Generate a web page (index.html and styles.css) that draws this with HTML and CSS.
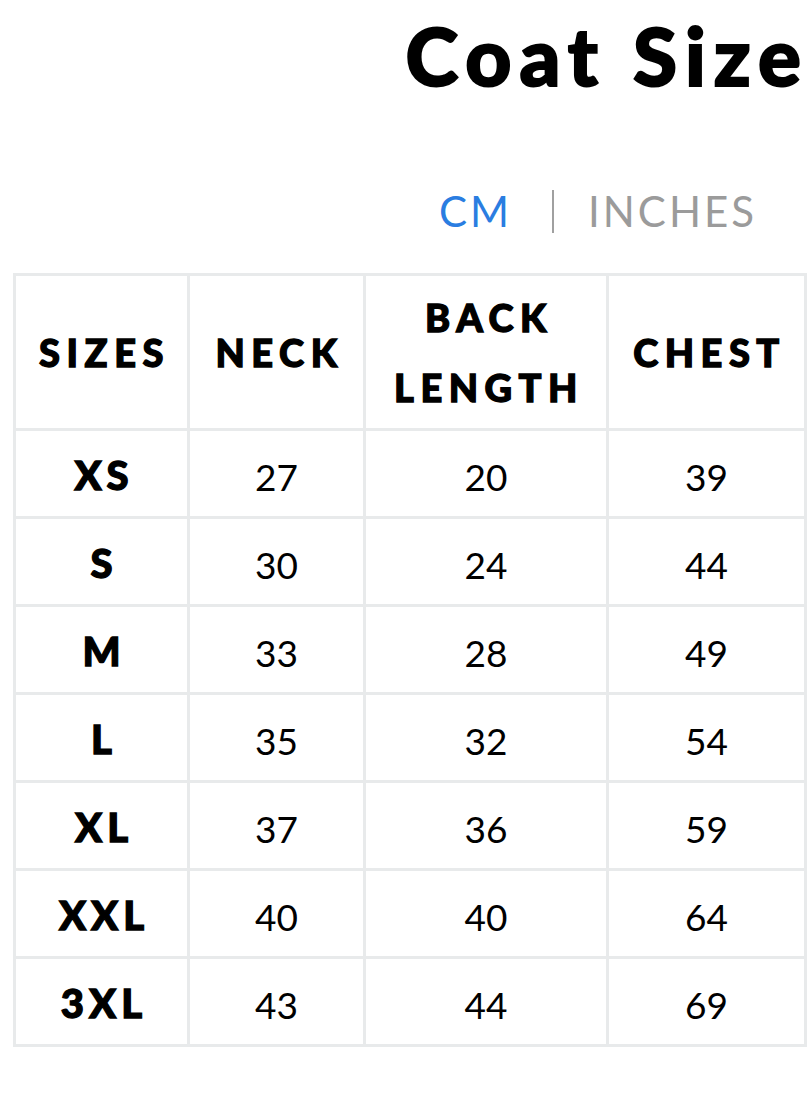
FILE: index.html
```html
<!DOCTYPE html>
<html lang="en">
<head>
<meta charset="utf-8">
<title>Coat Size</title>
<link rel="stylesheet" href="styles.css">
</head>
<body>
<div class="page">
  <h1 class="title">Coat Size</h1>
  <div class="units">
    <span class="unit active">CM</span>
    <span class="divider"></span>
    <span class="unit">INCHES</span>
  </div>
  <div class="chart">
    <div class="cell head">SIZES</div>
    <div class="cell head">NECK</div>
    <div class="cell head">BACK<br>LENGTH</div>
    <div class="cell head">CHEST</div>

    <div class="cell size">XS</div><div class="cell num">27</div><div class="cell num">20</div><div class="cell num">39</div>
    <div class="cell size">S</div><div class="cell num">30</div><div class="cell num">24</div><div class="cell num">44</div>
    <div class="cell size">M</div><div class="cell num">33</div><div class="cell num">28</div><div class="cell num">49</div>
    <div class="cell size">L</div><div class="cell num">35</div><div class="cell num">32</div><div class="cell num">54</div>
    <div class="cell size">XL</div><div class="cell num">37</div><div class="cell num">36</div><div class="cell num">59</div>
    <div class="cell size">XXL</div><div class="cell num">40</div><div class="cell num">40</div><div class="cell num">64</div>
    <div class="cell size">3XL</div><div class="cell num">43</div><div class="cell num">44</div><div class="cell num">69</div>
  </div>
</div>
</body>
</html>
```

FILE: styles.css
```css
html, body {
  margin: 0;
  padding: 0;
  background: #ffffff;
}

body {
  font-family: "Lato", "Open Sans", "Liberation Sans", sans-serif;
  color: #000;
}

.page {
  display: flex;
  flex-direction: column;
  padding-top: 7px;
}

.title {
  margin: 0;
  padding-right: 0;
  text-align: right;
  font-size: 80px;
  line-height: 96px;
  font-weight: 900;
  letter-spacing: 8px;
  -webkit-text-stroke: 2px #000;
}

.units {
  display: flex;
  justify-content: flex-end;
  align-items: center;
  margin-top: 83px;
  padding-right: 52px;
  height: 50px;
  font-size: 42px;
  line-height: 50px;
  letter-spacing: 3px;
}

.unit {
  color: #9b9b9b;
}

.unit.active {
  color: #2a7de1;
}

.divider {
  width: 2px;
  height: 43px;
  background: #a0a0a0;
  margin: 0 34px 0 40px;
}

.chart {
  display: grid;
  grid-template-columns: 171px 173px 240px 195px;
  grid-template-rows: 152px repeat(7, 85px);
  gap: 3px;
  padding: 3px;
  margin: 37px 0 0 13px;
  width: 794px;
  box-sizing: border-box;
  background: #e8eaeb;
}

.cell {
  background: #fff;
  display: flex;
  align-items: center;
  justify-content: center;
  text-align: center;
}

.head {
  font-size: 38px;
  font-weight: 900;
  letter-spacing: 6.5px;
  line-height: 70px;
  padding-left: 6px;
  -webkit-text-stroke: 1.3px #000;
}

.size {
  font-size: 40px;
  font-weight: 900;
  letter-spacing: 5px;
  padding-top: 3px;
  padding-left: 5px;
  -webkit-text-stroke: 1.3px #000;
}

.num {
  font-size: 37px;
  font-weight: 400;
  padding-top: 6px;
}
```
